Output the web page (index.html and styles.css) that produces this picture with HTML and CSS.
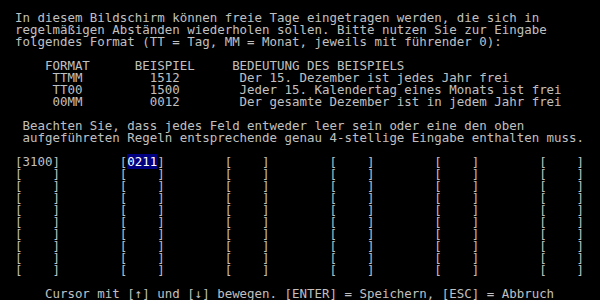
FILE: index.html
```html
<html lang="de">

<head>
    <meta charset="UTF-8">
    <meta name="viewport" content="width=device-width, initial-scale=1.0">
    <title>Freie Tage</title>
    <link rel="stylesheet" href="styles.css">
</head>

<body>
<pre class="screen">

  In diesem Bildschirm können freie Tage eingetragen werden, die sich in
  regelmäßigen Abständen wiederholen sollen. Bitte nutzen Sie zur Eingabe
  folgendes Format (TT = Tag, MM = Monat, jeweils mit führender 0):

      FORMAT      BEISPIEL     BEDEUTUNG DES BEISPIELS
       TTMM         1512        Der 15. Dezember ist jedes Jahr frei
       TT00         1500        Jeder 15. Kalendertag eines Monats ist frei
       00MM         0012        Der gesamte Dezember ist in jedem Jahr frei

   Beachten Sie, dass jedes Feld entweder leer sein oder eine den oben
   aufgeführeten Regeln entsprechende genau 4-stellige Eingabe enthalten muss.

  [3100]        [<span class="sel">0211</span>]        [    ]        [    ]        [    ]        [    ]
  [    ]        [    ]        [    ]        [    ]        [    ]        [    ]
  [    ]        [    ]        [    ]        [    ]        [    ]        [    ]
  [    ]        [    ]        [    ]        [    ]        [    ]        [    ]
  [    ]        [    ]        [    ]        [    ]        [    ]        [    ]
  [    ]        [    ]        [    ]        [    ]        [    ]        [    ]
  [    ]        [    ]        [    ]        [    ]        [    ]        [    ]
  [    ]        [    ]        [    ]        [    ]        [    ]        [    ]
  [    ]        [    ]        [    ]        [    ]        [    ]        [    ]
  [    ]        [    ]        [    ]        [    ]        [    ]        [    ]

      Cursor mit [↑] und [↓] bewegen. [ENTER] = Speichern, [ESC] = Abbruch</pre>
</body>

</html>
```

FILE: styles.css
```css
html,
body {
    margin: 0;
    background-color: #000000;
}

.screen {
    margin: 0;
    width: 600px;
    height: 300px;
    overflow: hidden;
    font-family: "DejaVu Sans Mono", "Liberation Mono", monospace;
    font-size: 12.457px;
    line-height: 12px;
    color: #c0c0c0;
}

.sel {
    background-color: #000080;
    color: #ffffff;
}
```
